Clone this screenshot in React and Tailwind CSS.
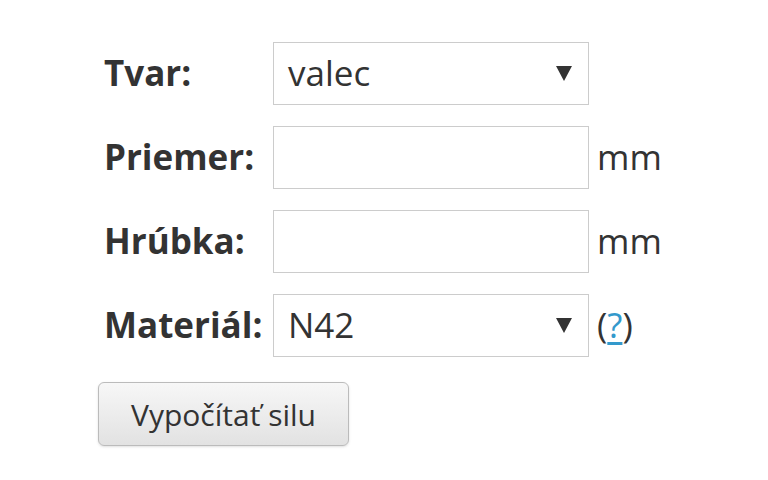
const font = { fontFamily: '"Open Sans", "Liberation Sans", sans-serif' };

const Select = ({ value }) => (
  <div className="flex h-[63px] w-[316px] items-center justify-between border border-[#cccccc] bg-white pl-[14px] pr-[16px] text-[35px] text-[#333333]">
    <span>{value}</span>
    <svg width="16" height="15" viewBox="0 0 16 15">
      <polygon points="0,0 16,0 8,15" fill="#333333" />
    </svg>
  </div>
);

const Input = () => (
  <div className="h-[63px] w-[316px] border border-[#cccccc] bg-white" />
);

const rows = [
  { label: 'Tvar:', field: <Select value="valec" />, after: null },
  { label: 'Priemer:', field: <Input />, after: 'mm' },
  { label: 'Hrúbka:', field: <Input />, after: 'mm' },
  {
    label: 'Materiál:',
    field: <Select value="N42" />,
    after: (
      <span>
        (<span className="text-[#3399cc] underline underline-offset-4">?</span>)
      </span>
    ),
  },
];

export default function App() {
  return (
    <div className="h-[480px] w-[768px] bg-white" style={font}>
      <div className="flex flex-col pl-[98px] pt-[42px]">
        <div className="flex flex-col gap-[21px] pl-[6px]">
          {rows.map((r, i) => (
            <div key={i} className="flex items-center">
              <div className="w-[169px] text-[35px] font-bold text-[#333333]">{r.label}</div>
              {r.field}
              {r.after && (
                <div className="pl-[8px] text-[35px] text-[#333333]">{r.after}</div>
              )}
            </div>
          ))}
        </div>
        <button className="mt-[25px] h-[64px] w-[251px] rounded-[6px] border border-[#bbbbbb] bg-gradient-to-b from-[#f7f7f7] to-[#e2e2e2] text-[30px] text-[#333333] shadow-sm">
          Vypočítať silu
        </button>
      </div>
    </div>
  );
}
